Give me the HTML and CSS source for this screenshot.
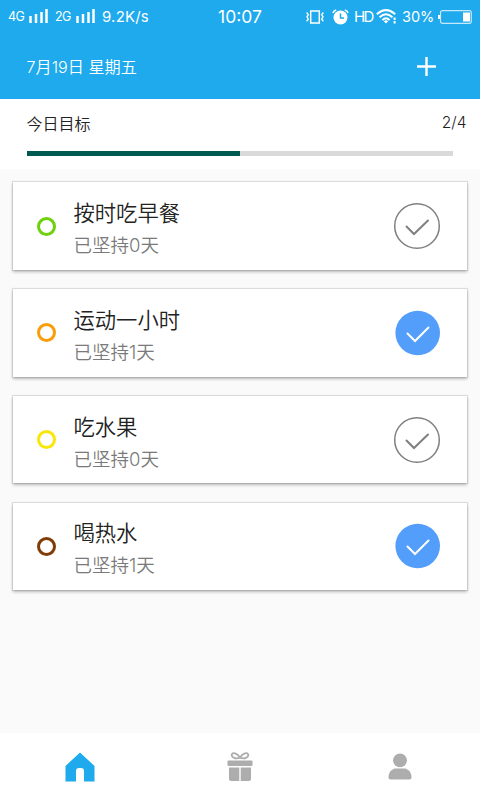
FILE: index.html
```html
<!DOCTYPE html>
<html lang="zh-CN">
<head>
<meta charset="utf-8">
<title>今日目标</title>
<link rel="stylesheet" href="styles.css">
</head>
<body>
<div class="app">
  <header class="header">
    <div class="status">
      <div class="status-left">
        <span class="net">4G</span>
        <svg class="signal" width="19" height="14" viewBox="0 0 19 14"><path d="M1.500 7v7M7 5v9M12.500 3v11M17.500 0v14" stroke="#fff" stroke-width="2.500"/></svg>
        <span class="net second">2G</span>
        <svg class="signal" width="19" height="14" viewBox="0 0 19 14"><path d="M1.500 7v7M7 5v9M12.500 3v11M17.500 0v14" stroke="#fff" stroke-width="2.500"/></svg>
        <span class="speed">9.2K/s</span>
      </div>
      <span class="clock">10:07</span>
      <div class="status-right">
        <svg class="vibrate" width="18" height="14" viewBox="0 0 18 14" fill="none" stroke="#fff"><rect x="4.700" y="1" width="8.600" height="12" stroke-width="1.500"/><path d="M.6 2.500l1.700 2-1.300 2.300 1.300 2.400-1.700 2M17.400 2.500l-1.700 2 1.300 2.300-1.300 2.400 1.700 2" stroke-width="1.400"/></svg>
        <svg class="alarm" width="17" height="16" viewBox="0 0 17 16" fill="none"><circle cx="8.500" cy="8.500" r="7" fill="#fff"/><path d="M.9 4.200Q1.500 1.500 4.200.9M16.100 4.200Q15.500 1.500 12.800.9" stroke="#fff" stroke-width="1.500"/><path d="M8.500 4.500v4.500H12" stroke="#1eaaed" stroke-width="1.500"/></svg>
        <span class="hd">HD</span>
        <svg class="wifi" width="21" height="15" viewBox="0 0 21 15" fill="none" stroke="#fff" stroke-width="2"><path d="M.8 5.200Q10 -3 19.200 5.200M3.600 8.300Q10 2.300 16.400 8.300M6.400 11.100Q10 7.500 13.600 11.100"/><path d="M7.800 12.200Q10 10.300 12.200 12.200L10 14.500z" fill="#fff" stroke="none"/><path d="M18.600 8.500v2.500M18.600 12v2.500"/></svg>
        <span class="percent">30%</span>
        <svg class="battery" width="34" height="14" viewBox="0 0 34 14" fill="none"><rect x="2.500" y=".7" width="30.800" height="12.600" rx="2" stroke="#c5e9fa" stroke-width="1.200"/><path d="M0 5h2v4H0z" fill="#fff"/><rect x="25" y="2.500" width="7" height="9" fill="#fff"/></svg>
      </div>
    </div>
    <div class="titlebar">
      <span class="date">7月19日 星期五</span>
      <svg class="plus" width="19" height="19" viewBox="0 0 19 19"><path d="M9.500 0v19M0 9.500h19" stroke="#fff" stroke-width="2.400"/></svg>
    </div>
  </header>

  <section class="summary">
    <div class="summary-row"><span>今日目标</span><span class="count">2/4</span></div>
    <div class="progress"><div class="progress-fill"></div></div>
  </section>

  <main class="list">
    <article class="card">
      <i class="ring green"></i>
      <div class="text"><h2>按时吃早餐</h2><p>已坚持0天</p></div>
      <svg class="check" width="48" height="48" viewBox="0 0 48 48" fill="none"><circle cx="24" cy="24" r="22.300" stroke="#808080" stroke-width="1.500"/><path d="M13.500 24.500l7.500 7.500L35 18.500" stroke="#808080" stroke-width="2" stroke-linecap="round"/></svg>
    </article>
    <article class="card">
      <i class="ring orange"></i>
      <div class="text"><h2>运动一小时</h2><p>已坚持1天</p></div>
      <svg class="check" width="48" height="48" viewBox="0 0 48 48" fill="none"><circle cx="24.700" cy="24" r="22.300" fill="#529efa"/><path d="M14.500 24.500l7.500 7.500L35.500 18.500" stroke="#fff" stroke-width="2" stroke-linecap="round"/></svg>
    </article>
    <article class="card">
      <i class="ring yellow"></i>
      <div class="text"><h2>吃水果</h2><p>已坚持0天</p></div>
      <svg class="check" width="48" height="48" viewBox="0 0 48 48" fill="none"><circle cx="24" cy="24" r="22.300" stroke="#808080" stroke-width="1.500"/><path d="M13.500 24.500l7.500 7.500L35 18.500" stroke="#808080" stroke-width="2" stroke-linecap="round"/></svg>
    </article>
    <article class="card">
      <i class="ring brown"></i>
      <div class="text"><h2>喝热水</h2><p>已坚持1天</p></div>
      <svg class="check" width="48" height="48" viewBox="0 0 48 48" fill="none"><circle cx="24.700" cy="24" r="22.300" fill="#529efa"/><path d="M14.500 24.500l7.500 7.500L35.500 18.500" stroke="#fff" stroke-width="2" stroke-linecap="round"/></svg>
    </article>
  </main>

  <nav class="tabs">
    <div class="tab"><svg width="30" height="30" viewBox="0 0 30 30"><path d="M15 .5L29.500 14v15.500H19V19q0-3-3-3h-2q-3 0-3 3v10.500H.5V14z" fill="#1eaaed"/></svg></div>
    <div class="tab"><svg width="26" height="30" viewBox="0 0 26 30"><g fill="#adadad"><rect x=".5" y="8.500" width="25" height="5.500" rx="1"/><path d="M2 15.500h10.300V29H4q-2 0-2-2zM13.700 15.500h10.300V27q0 2-2 2h-8.300z"/></g><path d="M13 5.500C10 1 5.500.2 4.800 2.500C4 5.500 9 7.500 13 5.500C17 7.500 22 5.500 21.200 2.500C20.500.2 16 1 13 5.500z" fill="none" stroke="#adadad" stroke-width="1.800"/></svg></div>
    <div class="tab"><svg width="24" height="30" viewBox="0 0 24 30" fill="#adadad"><circle cx="12" cy="8.300" r="6.900"/><path d="M.5 25.500C.5 19 5 16.500 8 16.500h8c3 0 7.500 2.500 7.500 9q0 2-2 2h-19q-2 0-2-2z"/></svg></div>
  </nav>
</div>
</body>
</html>
```
FILE: styles.css
```css
* { box-sizing: border-box; }
body {
  margin: 0;
  font-family: Inter, "Noto Sans CJK SC", sans-serif;
  font-weight: 350;
  color: #222;
}
svg { display: block; flex: none; }
.app {
  width: 480px;
  height: 800px;
  display: flex;
  flex-direction: column;
  background: #fafafa;
  overflow: hidden;
}
.header {
  height: 98.500px;
  flex: none;
  background: #1eaaed;
  color: #fff;
}
.status {
  height: 33px;
  display: grid;
  grid-template-columns: 1fr auto 1fr;
  align-items: center;
  padding: 0 8px;
  font-weight: 400;
  white-space: nowrap;
}
.status-left, .status-right { display: flex; align-items: center; }
.status-right { justify-content: flex-end; }
.net { width: 17px; font-size: 12.500px; letter-spacing: -.5px; }
.signal { margin: 0 0 1px 4px; }
.second { margin-left: 7px; }
.speed { margin-left: 7px; font-size: 15px; letter-spacing: .2px; }
.clock { font-size: 17.500px; }
.alarm { margin-left: 8px; }
.hd { margin-left: 5px; font-size: 15px; letter-spacing: -1.600px; width: 20px; }
.wifi { margin-left: 2px; }
.percent { margin-left: 5px; font-size: 14.500px; width: 32px; }
.battery { margin-left: 4px; }
.titlebar {
  height: 65px;
  display: flex;
  align-items: center;
  justify-content: space-between;
  padding: 0 44px 0 26.500px;
}
.date { font-size: 16.150px; }
.plus { margin-top: 2px; }
.summary {
  height: 70.500px;
  flex: none;
  padding: 12px 27px 0 26.500px;
  background: #fff;
}
.summary-row {
  height: 24px;
  margin-right: -13.500px;
  display: flex;
  justify-content: space-between;
  align-items: center;
  font-size: 16px;
}
.count { font-size: 15.500px; }
.progress { height: 5.500px; margin-top: 16px; background: #d9d9d9; }
.progress-fill { width: 50%; height: 100%; background: #005a4f; }
.list {
  flex: 1;
  display: flex;
  flex-direction: column;
  gap: 19.300px;
  padding: 13.300px 13px 0;
}
.card {
  height: 87.500px;
  display: flex;
  align-items: center;
  padding: 0 26px 0 24px;
  background: #fff;
  box-shadow: 0 0 1px 1px rgba(0, 0, 0, .11), 0 2px 3px rgba(0, 0, 0, .25);
}
.ring { width: 19px; height: 19px; border: 3px solid; border-radius: 50%; }
.green { border-color: #6fd00c; }
.orange { border-color: #f99d0b; }
.yellow { border-color: #f9e60b; }
.brown { border-color: #803d08; }
.text { flex: 1; padding: 7px 0 0 17.500px; }
.text h2, .text p { margin: 0; font-weight: 350; white-space: nowrap; }
.text h2 { font-size: 21.300px; line-height: 32px; }
.text p { font-size: 18.500px; line-height: 33px; color: #7a7a7a; }
.tabs {
  height: 67px;
  flex: none;
  display: grid;
  grid-template-columns: repeat(3, 1fr);
  align-items: center;
  background: #fff;
}
.tab { display: flex; justify-content: center; }
```
